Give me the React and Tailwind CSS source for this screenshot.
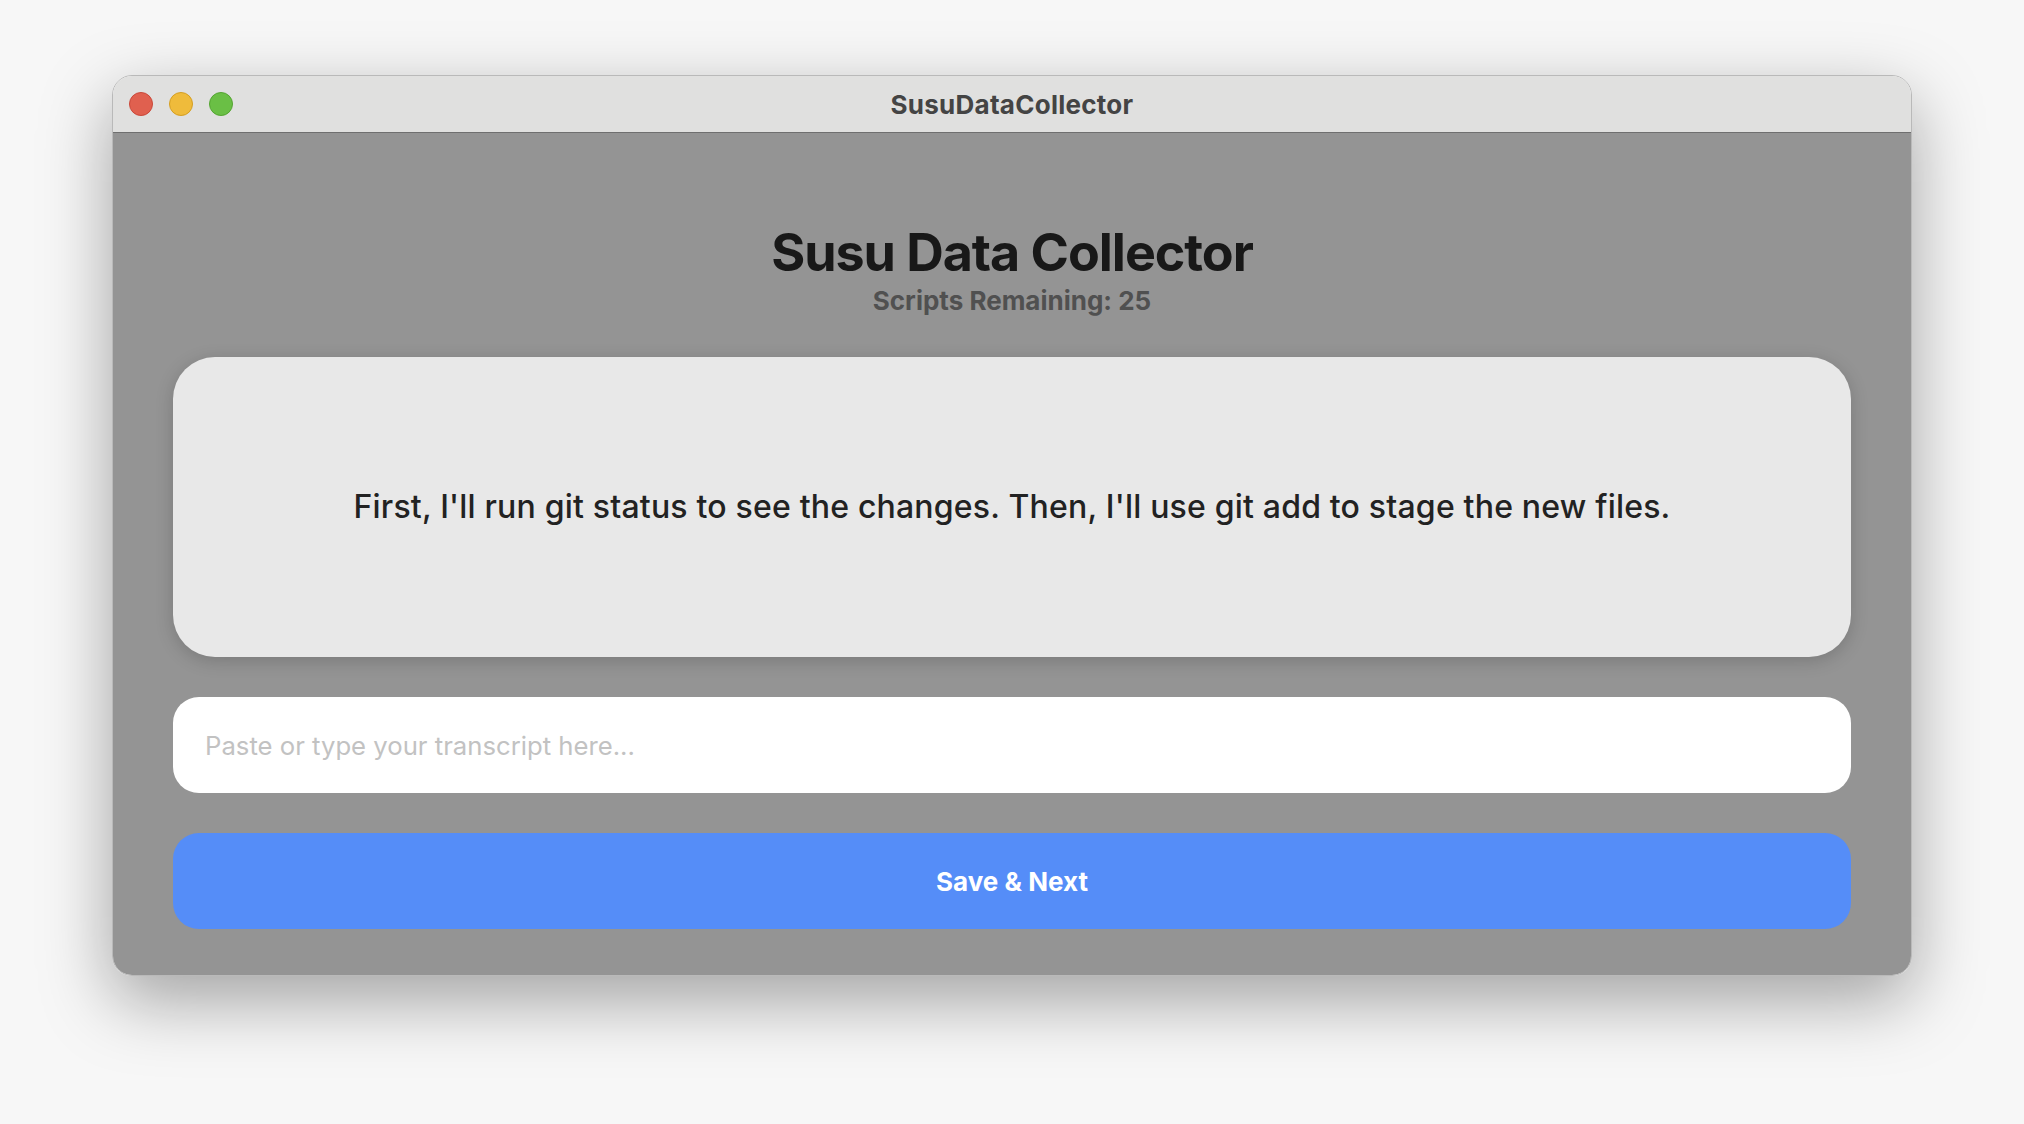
import React from 'react';

const FONT = { fontFamily: 'Inter, "Noto Sans", "Liberation Sans", sans-serif' };

function TrafficLights() {
  return (
    <div className="absolute left-[16px] top-0 h-full flex items-center gap-[16px]">
      <span className="w-[24px] h-[24px] rounded-full bg-[#e0604f] border border-[#c9483a]" />
      <span className="w-[24px] h-[24px] rounded-full bg-[#efbb3b] border border-[#d49e22]" />
      <span className="w-[24px] h-[24px] rounded-full bg-[#6abf45] border border-[#54a432]" />
    </div>
  );
}

export default function App() {
  return (
    <div className="w-[2024px] h-[1124px] bg-[#f7f7f7] pt-[75px] pl-[112px]" style={FONT}>
      <div className="w-[1800px] h-[901px] rounded-[20px] overflow-hidden flex flex-col border border-[#b9b9b9] shadow-[0_24px_70px_rgba(0,0,0,0.35)]">
        <div className="relative h-[57px] shrink-0 bg-[#e0e0df] border-b border-[#6f6f6f] flex items-center justify-center">
          <TrafficLights />
          <span className="text-[26px] font-bold text-[#444] tracking-[0.01em]">SusuDataCollector</span>
        </div>

        <div className="flex-1 bg-[#949494] px-[60px] pt-[94px] flex flex-col">
          <h1 className="text-center text-[52px] leading-none font-bold text-[#181818] tracking-[-0.02em]">
            Susu Data Collector
          </h1>
          <p className="mt-[9px] text-center text-[26px] leading-none font-bold text-[#505050]">
            Scripts Remaining: 25
          </p>

          <div className="mt-[43px] h-[300px] rounded-[42px] bg-[#e8e8e8] shadow-[0_4px_18px_rgba(0,0,0,0.18)] flex items-center justify-center">
            <p className="text-[32px] font-medium text-[#222] tracking-[0.006em]">
              First, I'll run git status to see the changes. Then, I'll use git add to stage the new files.
            </p>
          </div>

          <input
            className="mt-[40px] h-[96px] rounded-[26px] bg-white px-[32px] text-[25.7px] text-[#222] placeholder:text-[#c2c2c2] outline-none"
            placeholder="Paste or type your transcript here..."
          />

          <button className="mt-[40px] h-[96px] rounded-[26px] bg-[#558df8] text-white text-[26px] font-bold">
            Save &amp; Next
          </button>
        </div>
      </div>
    </div>
  );
}
